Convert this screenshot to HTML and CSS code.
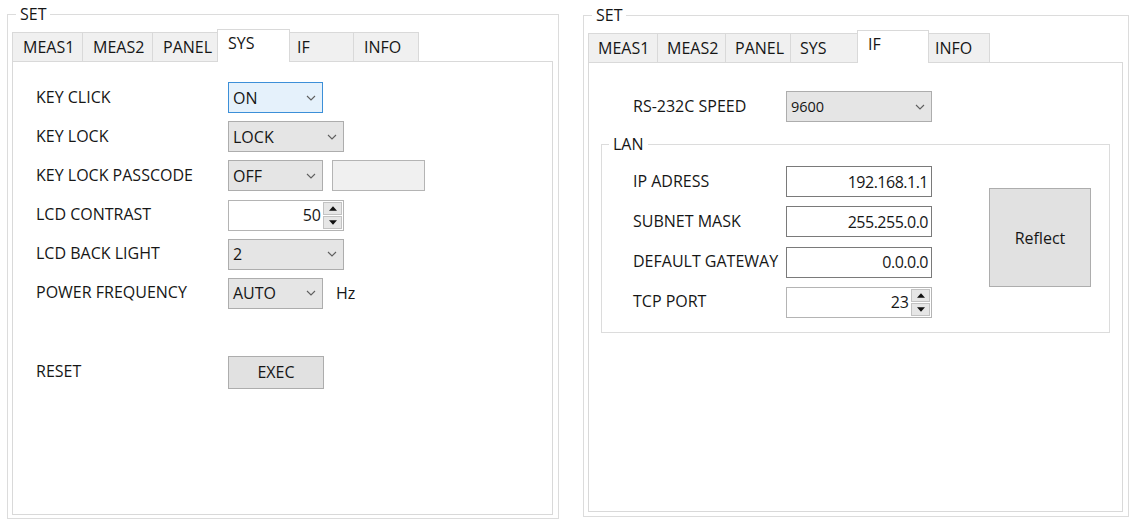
FILE: index.html
```html
<!DOCTYPE html>
<html lang="en">
<head>
<meta charset="utf-8">
<title>SET</title>
<link rel="stylesheet" href="styles.css">
</head>
<body>
<div class="screen">

  <fieldset class="group group-sys">
    <legend class="group-title">SET</legend>
    <div class="tabs">
      <div class="tab tab-meas1">MEAS1</div>
      <div class="tab tab-meas2">MEAS2</div>
      <div class="tab tab-panel">PANEL</div>
      <div class="tab tab-sys tab-active">SYS</div>
      <div class="tab tab-if tab-tight">IF</div>
      <div class="tab tab-info">INFO</div>
    </div>
    <div class="page">
      <div class="form form-sys">
        <div class="label">KEY CLICK</div>
        <div class="combo combo-short combo-focus"><span>ON</span><svg class="chev" viewBox="0 0 10 6"><path d="M1 1 L5 5 L9 1"/></svg></div>

        <div class="label">KEY LOCK</div>
        <div class="combo combo-long"><span>LOCK</span><svg class="chev" viewBox="0 0 10 6"><path d="M1 1 L5 5 L9 1"/></svg></div>

        <div class="label">KEY LOCK PASSCODE</div>
        <div class="ctl-row">
          <div class="combo combo-short"><span>OFF</span><svg class="chev" viewBox="0 0 10 6"><path d="M1 1 L5 5 L9 1"/></svg></div>
          <div class="textbox textbox-disabled"></div>
        </div>

        <div class="label">LCD CONTRAST</div>
        <div class="spin spin-long">
          <span class="spin-value">50</span>
          <div class="spin-btns">
            <div class="spin-btn"><svg class="tri" viewBox="0 0 7 4"><polygon points="0,4 3.5,0 7,4"/></svg></div>
            <div class="spin-btn"><svg class="tri" viewBox="0 0 7 4"><polygon points="0,0 7,0 3.5,4"/></svg></div>
          </div>
        </div>

        <div class="label">LCD BACK LIGHT</div>
        <div class="combo combo-long"><span>2</span><svg class="chev" viewBox="0 0 10 6"><path d="M1 1 L5 5 L9 1"/></svg></div>

        <div class="label">POWER FREQUENCY</div>
        <div class="ctl-row">
          <div class="combo combo-short"><span>AUTO</span><svg class="chev" viewBox="0 0 10 6"><path d="M1 1 L5 5 L9 1"/></svg></div>
          <span class="unit">Hz</span>
        </div>
      </div>

      <div class="form form-sys form-reset">
        <div class="label">RESET</div>
        <button class="btn btn-exec" type="button">EXEC</button>
      </div>
    </div>
  </fieldset>

  <fieldset class="group group-if">
    <legend class="group-title">SET</legend>
    <div class="tabs">
      <div class="tab tab-meas1">MEAS1</div>
      <div class="tab tab-meas2">MEAS2</div>
      <div class="tab tab-panel">PANEL</div>
      <div class="tab tab-sys">SYS</div>
      <div class="tab tab-if tab-active">IF</div>
      <div class="tab tab-info tab-tight">INFO</div>
    </div>
    <div class="page">
      <div class="form form-rs">
        <div class="label">RS-232C SPEED</div>
        <div class="combo combo-wide"><span class="combo-small">9600</span><svg class="chev" viewBox="0 0 10 6"><path d="M1 1 L5 5 L9 1"/></svg></div>
      </div>

      <fieldset class="lan">
        <legend class="lan-title">LAN</legend>
        <div class="lan-body">
          <div class="form form-lan">
            <div class="label">IP ADRESS</div>
            <div class="textbox textbox-wide">192.168.1.1</div>

            <div class="label">SUBNET MASK</div>
            <div class="textbox textbox-wide">255.255.0.0</div>

            <div class="label">DEFAULT GATEWAY</div>
            <div class="textbox textbox-wide">0.0.0.0</div>

            <div class="label">TCP PORT</div>
            <div class="spin spin-wide">
              <span class="spin-value">23</span>
              <div class="spin-btns">
                <div class="spin-btn"><svg class="tri" viewBox="0 0 7 4"><polygon points="0,4 3.5,0 7,4"/></svg></div>
                <div class="spin-btn"><svg class="tri" viewBox="0 0 7 4"><polygon points="0,0 7,0 3.5,4"/></svg></div>
              </div>
            </div>
          </div>
          <button class="btn btn-reflect" type="button">Reflect</button>
        </div>
      </fieldset>
    </div>
  </fieldset>

</div>
</body>
</html>
```

FILE: styles.css
```css
* {
  box-sizing: border-box;
}

html,
body {
  margin: 0;
  background: #ffffff;
}

body {
  font-family: "Open Sans", "Noto Sans", sans-serif;
  font-size: 16px;
  line-height: 18px;
  color: #161616;
  overflow: hidden;
}

.screen {
  display: flex;
  align-items: flex-start;
  gap: 24px;
  padding: 5px 0 0 7px;
}

/* group box */
.group {
  margin: 0;
  min-width: 0;
  border: 1px solid #dcdcdc;
  padding: 6px 5px 3px 4px;
}

.group-sys {
  width: 552px;
}

.group-if {
  width: 546px;
  margin-top: 1px;
  padding-bottom: 4px;
}

.group-title {
  margin-left: 4px;
  padding: 0 4px;
  line-height: 18px;
}

/* tabs */
.tabs {
  display: flex;
  align-items: flex-end;
  height: 33px;
  margin-bottom: -1px;
  position: relative;
  z-index: 1;
}

.tab {
  height: 30px;
  margin-left: -1px;
  padding: 5px 0 0 10px;
  border: 1px solid #d9d9d9;
  background: #f0f0f0;
  white-space: nowrap;
}

.tab:first-child {
  margin-left: 0;
}

.tab-tight {
  padding-left: 7px;
}

.tab-active {
  height: 33px;
  padding-top: 4px;
  border-bottom: none;
  background: #ffffff;
  position: relative;
  z-index: 2;
}

.group-sys .tab-meas1 { width: 71px; }
.group-sys .tab-meas2 { width: 71px; }
.group-sys .tab-panel { width: 66px; }
.group-sys .tab-sys { width: 73px; }
.group-sys .tab-if { width: 65px; }
.group-sys .tab-info { width: 66px; }

.group-if .tab-meas1 { width: 70px; padding-left: 9px; }
.group-if .tab-meas2 { width: 69px; padding-left: 9px; }
.group-if .tab-panel { width: 66px; padding-left: 9px; }
.group-if .tab-sys { width: 68px; padding-left: 9px; }
.group-if .tab-if { width: 72px; }
.group-if .tab-info { width: 62px; padding-left: 6px; }

/* tab page */
.page {
  border: 1px solid #d9d9d9;
  background: #ffffff;
}

.group-sys .page {
  height: 454px;
  padding: 20px 0 0 23px;
}

.group-if .page {
  height: 450px;
  padding: 28px 12px 0 12px;
}

/* forms */
.form {
  display: grid;
  grid-template-columns: 192px auto;
  grid-auto-rows: 31px;
  row-gap: 8.2px;
  align-items: center;
  justify-items: start;
}

.form-reset {
  margin-top: 47px;
  grid-auto-rows: 33px;
}

.form-rs {
  padding-left: 32px;
  grid-template-columns: 153px auto;
}

.form-lan {
  grid-template-columns: 153px auto;
  row-gap: 9.33px;
}

.label {
  padding-bottom: 2px;
  white-space: nowrap;
}

.ctl-row {
  display: flex;
  align-items: center;
  gap: 9px;
}

.unit {
  margin-left: 4px;
}

/* combo box */
.combo {
  display: flex;
  align-items: center;
  height: 31px;
  padding-left: 4px;
  border: 1px solid #adadad;
  background: #e5e5e5;
}

.combo-focus {
  border-color: #3c8fd8;
  background: #e5f1fb;
}

.combo-short { width: 95px; }
.combo-long { width: 116px; }
.combo-wide { width: 146px; }

.combo-small {
  font-size: 14.5px;
  padding-top: 1px;
}

.chev {
  width: 10px;
  height: 6px;
  margin-left: auto;
  margin-right: 6px;
  fill: none;
  stroke: #5f5f5f;
  stroke-width: 1.1;
}

/* text box */
.textbox {
  display: flex;
  align-items: center;
  justify-content: flex-end;
  height: 31px;
  padding-right: 3px;
  border: 1px solid #7a7a7a;
  background: #ffffff;
  letter-spacing: -0.5px;
}

.textbox-disabled {
  width: 93px;
  border-color: #b4b4b4;
  background: #f0f0f0;
}

.textbox-wide {
  width: 146px;
}

/* spin box */
.spin {
  display: flex;
  height: 31px;
  padding: 1px;
  border: 1px solid #b4b4b4;
  background: #ffffff;
}

.spin-long { width: 116px; }
.spin-wide { width: 146px; }

.spin-value {
  flex: 1;
  align-self: center;
  text-align: right;
  padding-right: 2px;
}

.spin-btns {
  display: flex;
  flex-direction: column;
  gap: 1px;
  width: 19px;
}

.spin-btn {
  flex: 1;
  display: flex;
  align-items: center;
  justify-content: center;
  border: 1px solid #c2c2c2;
  background: #e6e6e6;
}

.tri {
  width: 8px;
  height: 5px;
  fill: #111111;
}

/* buttons */
.btn {
  display: flex;
  align-items: center;
  justify-content: center;
  margin: 0;
  padding: 0;
  border: 1px solid #adadad;
  background: #e1e1e1;
  font: inherit;
  color: inherit;
}

.btn-exec {
  width: 96px;
  height: 33px;
}

.btn-reflect {
  flex: none;
  width: 102px;
  height: 99px;
  margin: 22px 0 0 57px;
}

/* LAN group */
.lan {
  margin: 13px 0 0 0;
  min-width: 0;
  padding: 0;
  border: 1px solid #dcdcdc;
}

.lan-title {
  margin-left: 7px;
  padding: 0 4px;
  line-height: 18px;
}

.lan-body {
  display: flex;
  align-items: flex-start;
  padding: 13px 0 14px 31px;
}
```
